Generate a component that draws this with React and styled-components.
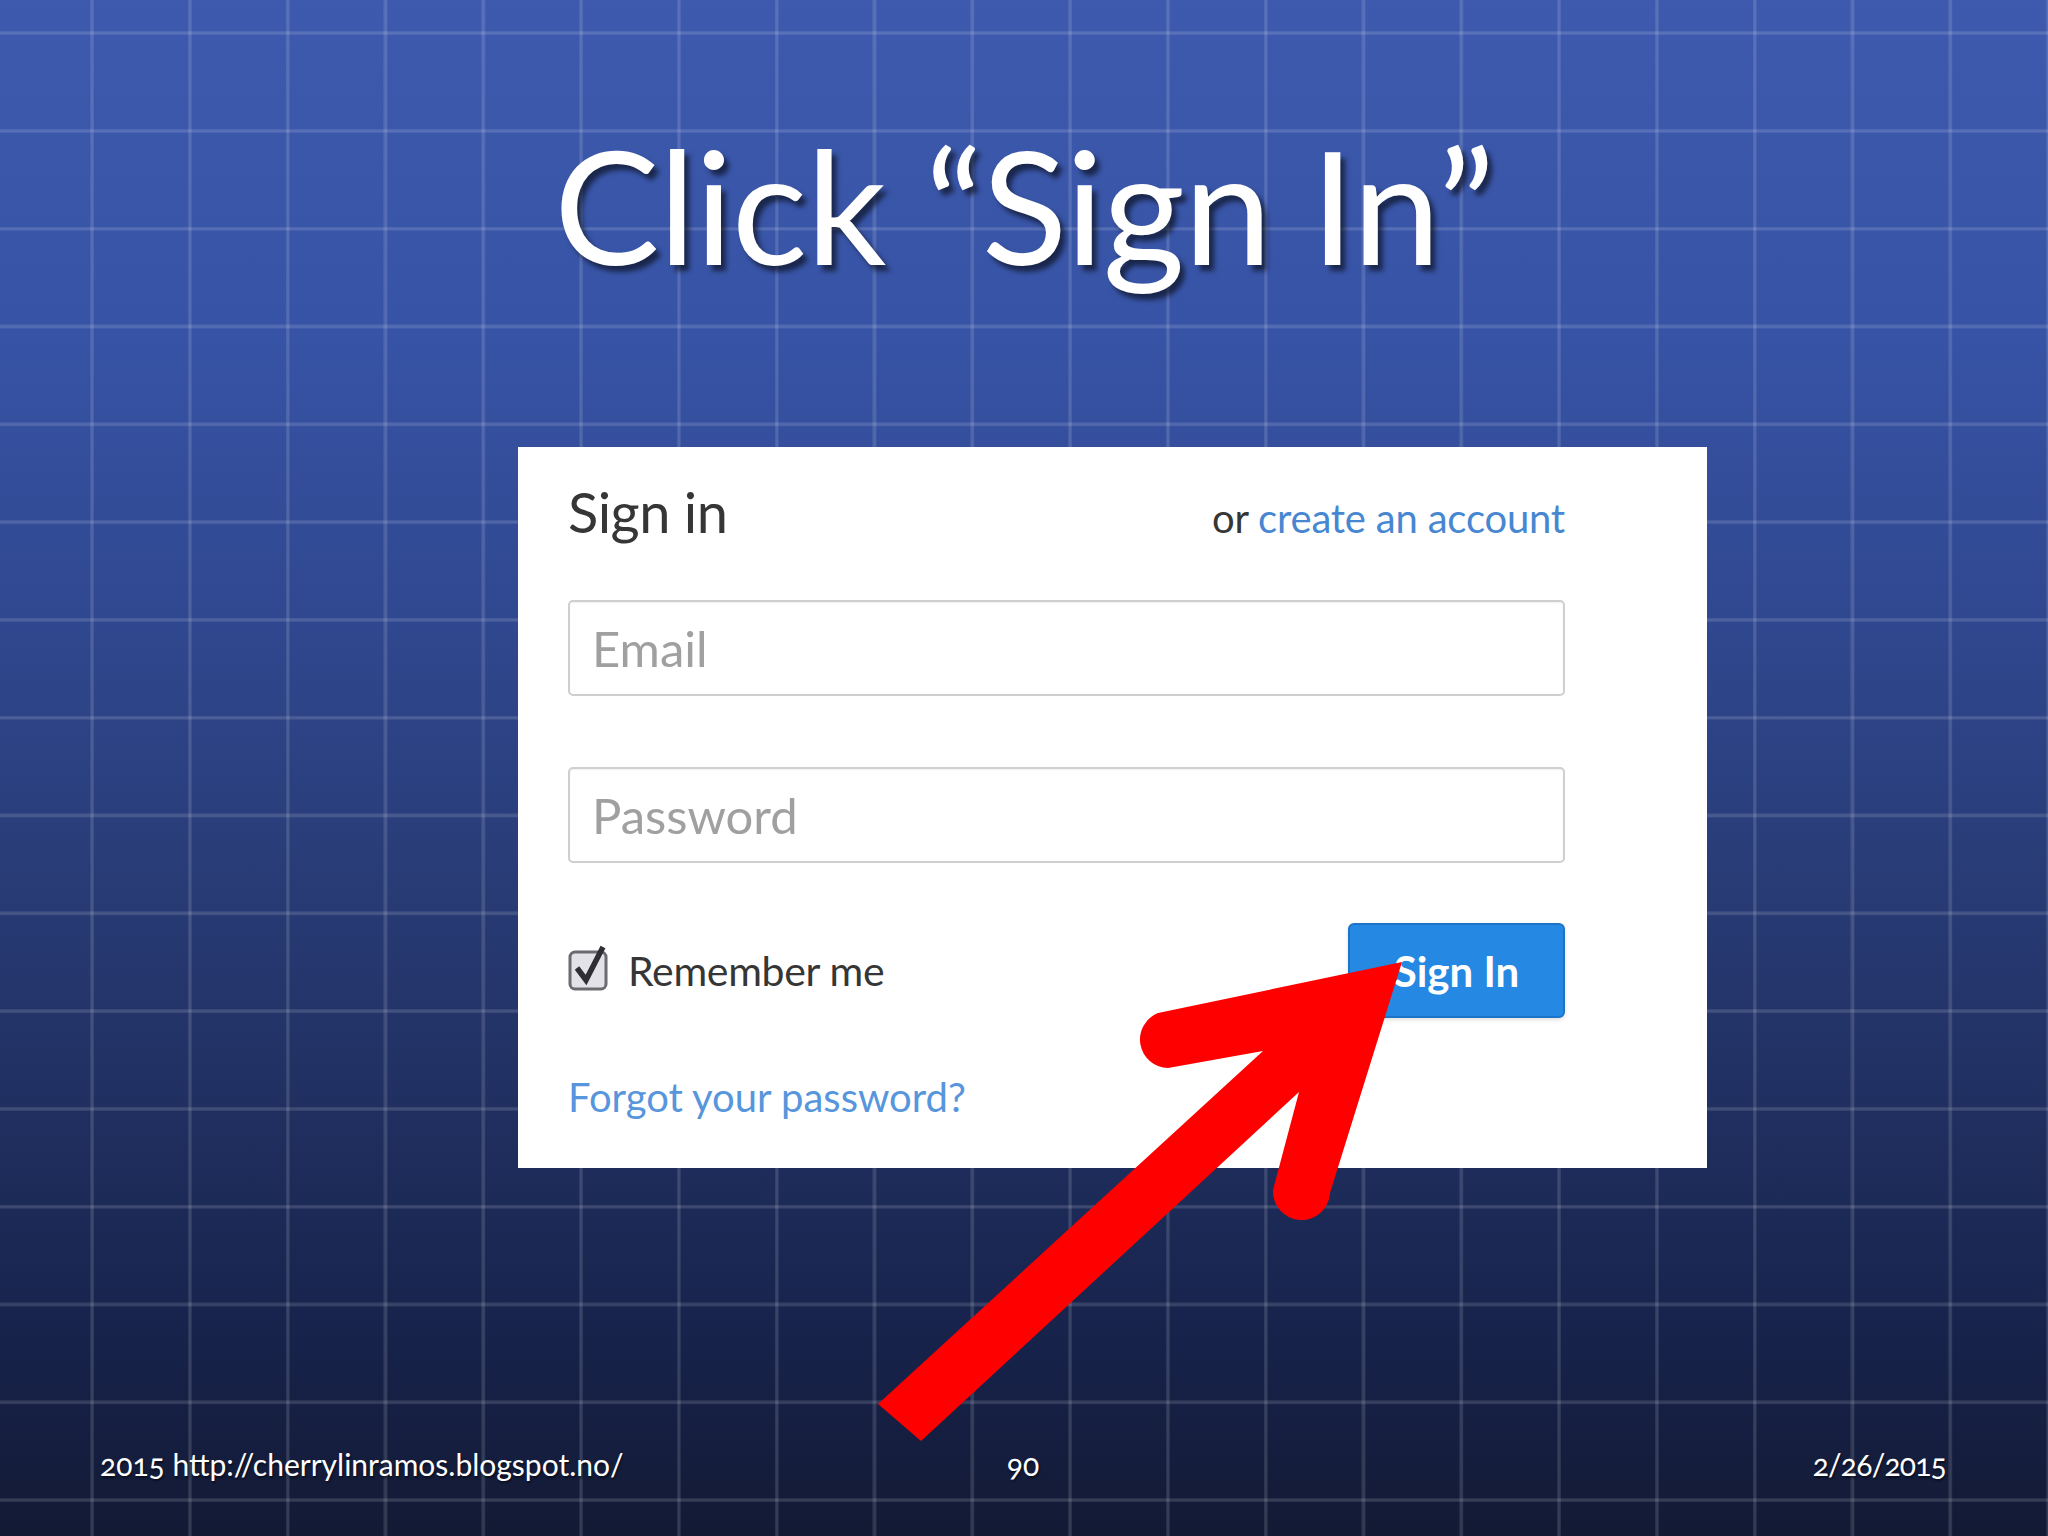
import React from 'react';
import styled, { createGlobalStyle } from 'styled-components';

const colors = {
    white: '#ffffff',
    text: '#363636',
    placeholder: '#a0a0a0',
    link: '#4787d2',
    linkLight: '#5795dc',
    button: '#2589e4',
    buttonEdge: '#1c74c8',
    border: '#cfcfcf',
    arrow: '#ff0000',
};

const GlobalStyle = createGlobalStyle`
    html, body {
        margin: 0;
        padding: 0;
        background: #141c36;
    }

    * {
        box-sizing: border-box;
    }
`;

const Slide = styled.div`
    position: relative;
    width: 2048px;
    height: 1536px;
    overflow: hidden;
    display: flex;
    flex-direction: column;
    font-family: Lato, "Open Sans", "Liberation Sans", sans-serif;
    background-color: #141c36;
    background-image:
        repeating-linear-gradient(90deg,
            transparent 0 90px,
            rgba(255, 255, 255, 0.06) 90px,
            rgba(255, 255, 255, 0.14) 91.5px 93px,
            rgba(255, 255, 255, 0.06) 94px,
            transparent 94.5px 97.8px),
        repeating-linear-gradient(180deg,
            transparent 0 31px,
            rgba(255, 255, 255, 0.06) 31px,
            rgba(255, 255, 255, 0.14) 32.5px 34px,
            rgba(255, 255, 255, 0.06) 35px,
            transparent 35.5px 97.8px),
        linear-gradient(180deg,
            #3d5aae 0%,
            #3753a5 22%,
            #304890 40%,
            #283b75 58%,
            #1e2d5c 75%,
            #17224a 88%,
            #131a34 100%);
`;

const Title = styled.h1`
    margin: 125px 0 0;
    text-align: center;
    font-family: Lato, "Open Sans", sans-serif;
    font-weight: 400;
    font-size: 158px;
    line-height: 1;
    letter-spacing: -1px;
    color: ${colors.white};
    text-shadow: 5px 6px 5px rgba(0, 0, 0, 0.55);
`;

const Card = styled.section`
    margin: 164px 0 0 518px;
    width: 1189px;
    padding: 37px 142px 51px 50px;
    background: ${colors.white};
    display: flex;
    flex-direction: column;
`;

const CardHeader = styled.div`
    display: flex;
    justify-content: space-between;
    align-items: baseline;
`;

const Heading = styled.h2`
    margin: 0;
    font-weight: 400;
    font-size: 56px;
    line-height: 1;
    letter-spacing: -0.5px;
    color: ${colors.text};
`;

const Aside = styled.span`
    font-size: 40px;
    line-height: 1;
    letter-spacing: -0.2px;
    color: ${colors.text};
`;

const Link = styled.a`
    color: ${({ light }) => (light ? colors.linkLight : colors.link)};
    text-decoration: none;
`;

const Field = styled.input`
    display: block;
    width: 100%;
    height: 96px;
    margin-top: ${({ gap }) => gap}px;
    padding: 0 22px;
    border: 2px solid ${colors.border};
    border-radius: 5px;
    background: ${colors.white};
    font-family: Lato, "Open Sans", sans-serif;
    font-size: 49px;
    color: ${colors.text};
    box-shadow: inset 0 1px 2px rgba(0, 0, 0, 0.06);
    outline: none;

    &::placeholder {
        color: ${colors.placeholder};
    }
`;

const ActionRow = styled.div`
    margin-top: 60px;
    height: 95px;
    display: flex;
    align-items: center;
    justify-content: space-between;
`;

const Remember = styled.label`
    display: flex;
    align-items: center;
    gap: 18px;
    font-size: 41px;
    line-height: 1;
    letter-spacing: -0.3px;
    color: ${colors.text};
`;

const CheckIcon = styled.svg`
    width: 42px;
    height: 48px;
    margin-top: -6px;
`;

const SubmitButton = styled.button`
    width: 217px;
    height: 95px;
    border: 2px solid ${colors.buttonEdge};
    border-radius: 6px;
    background: ${colors.button};
    color: ${colors.white};
    font-family: Lato, "Open Sans", sans-serif;
    font-weight: 700;
    font-size: 42px;
    line-height: 1;
    padding: 0;
    box-shadow: 0 2px 4px rgba(0, 0, 0, 0.12);
`;

const Forgot = styled.div`
    margin-top: 59px;
    font-size: 40px;
    line-height: 1;
`;

const Footer = styled.footer`
    margin-top: auto;
    padding: 0 102px 57px 100px;
    display: grid;
    grid-template-columns: 1fr auto 1fr;
    align-items: baseline;
    font-size: 30px;
    line-height: 1;
    color: ${colors.white};
    font-variant-numeric: oldstyle-nums;
    text-shadow: 1px 2px 2px rgba(0, 0, 0, 0.5);
`;

const FooterCell = styled.span`
    justify-self: ${({ align }) => align || 'start'};
    letter-spacing: ${({ tight }) => (tight ? '-0.8px' : '0')};
`;

const ArrowLayer = styled.svg`
    position: absolute;
    left: 0;
    top: 0;
    width: 2048px;
    height: 1536px;
    pointer-events: none;
`;

const Checkbox = () => (
    <CheckIcon viewBox="0 0 42 48">
        <rect x="2" y="8" width="36" height="37" rx="5" fill="#e2e2e8" stroke="#6a6a70" strokeWidth="3" />
        <path d="M9 24 L18 36 L35 3" fill="none" stroke="#2e2e34" strokeWidth="5.5" strokeLinejoin="miter" />
    </CheckIcon>
);

const Arrow = () => (
    <ArrowLayer viewBox="0 0 2048 1536">
        <path
            fill={colors.arrow}
            d="M1402 962
               L1158 1013
               A28.5 28.5 0 0 0 1168 1068
               L1263 1051
               L878 1404
               L921 1441
               L1299 1092
               L1273 1190
               A28.5 28.5 0 0 0 1330 1193
               Z"
        />
    </ArrowLayer>
);

const App = () => (
    <Slide>
        <GlobalStyle />
        <Title>Click “Sign In”</Title>

        <Card>
            <CardHeader>
                <Heading>Sign in</Heading>
                <Aside>
                    or <Link href="#signup">create an account</Link>
                </Aside>
            </CardHeader>

            <Field gap={60} type="email" placeholder="Email" />
            <Field gap={71} type="password" placeholder="Password" />

            <ActionRow>
                <Remember>
                    <Checkbox />
                    Remember me
                </Remember>
                <SubmitButton type="button">Sign In</SubmitButton>
            </ActionRow>

            <Forgot>
                <Link light href="#forgot">Forgot your password?</Link>
            </Forgot>
        </Card>

        <Footer>
            <FooterCell>2015 http://cherrylinramos.blogspot.no/</FooterCell>
            <FooterCell align="center">90</FooterCell>
            <FooterCell align="end" tight>2/26/2015</FooterCell>
        </Footer>

        <Arrow />
    </Slide>
);

export default App;
